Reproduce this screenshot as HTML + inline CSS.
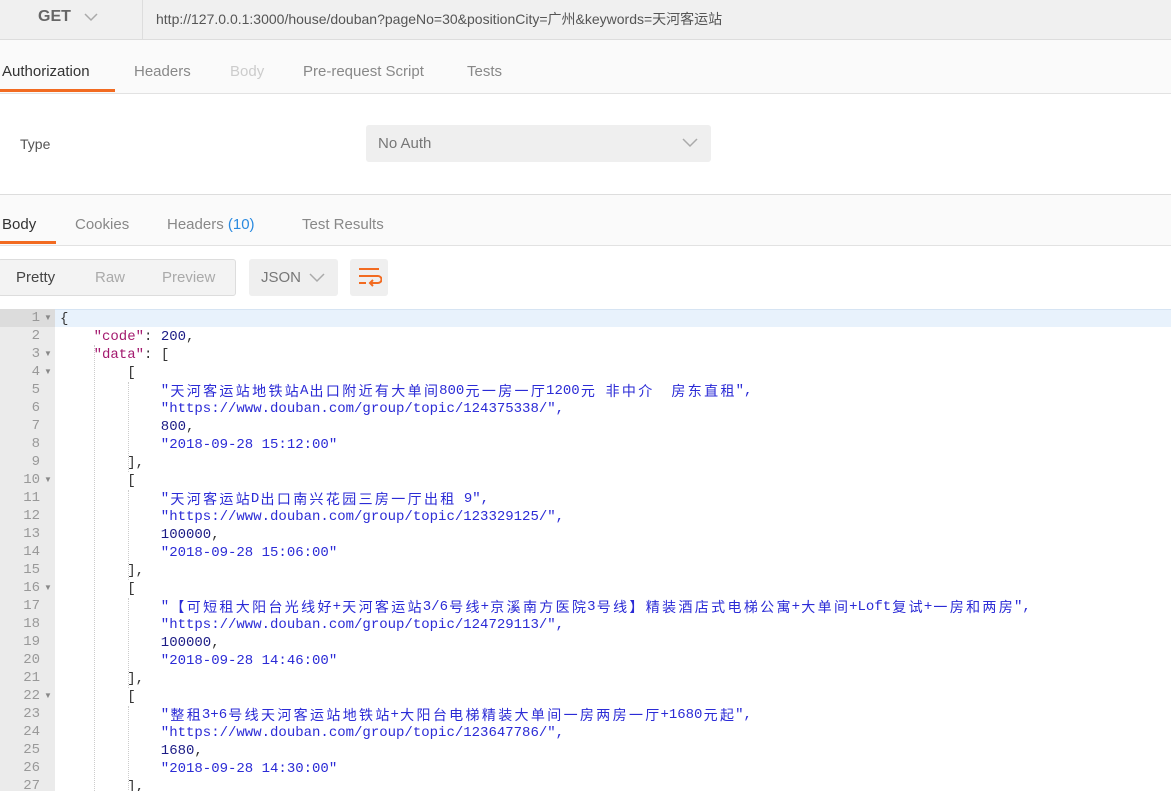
<!DOCTYPE html>
<html style="overflow:hidden;width:1171px;height:791px"><head><meta charset="utf-8"><style>
*{margin:0;padding:0;box-sizing:border-box}
body{width:1171px;height:791px;overflow:hidden;background:#fff;font-family:"Liberation Sans","Noto Sans CJK SC",sans-serif;position:relative;color:#505050}
.abs{position:absolute}
.top{left:0;top:0;width:1171px;height:40px;background:#f0f0f0;border-bottom:1px solid #ddd}
.tabs{left:0;top:40px;width:1171px;height:54px;background:#fafafa;border-bottom:1px solid #e2e2e2}
.t{position:absolute;font-size:15px;color:#888}
.rtabs{left:0;top:194px;width:1171px;height:52px;background:#fafafa;border-top:1px solid #ddd;border-bottom:1px solid #e2e2e2}
.code{font-family:"Liberation Mono","Noto Sans CJK SC",monospace;font-size:14px;white-space:pre;overflow:hidden}
.cj{display:inline-block;vertical-align:top;width:16.35px;height:18px;text-align:center;font-family:"Noto Sans CJK SC",sans-serif;font-size:14px;line-height:18px;overflow:hidden}
.ln{position:absolute;left:0;width:40px;text-align:right;color:#999;font-family:"Liberation Mono",monospace;font-size:14px}
.ar{position:absolute;left:44px;color:#888;font-size:8px}
.k{color:#a3196e}.s{color:#2b2bd6}.n{color:#1c1c86}.p{color:#333}
.g{position:absolute;border-left:1px dotted #ccc;width:0}
#wrap{position:absolute;left:0;top:0;width:1171px;height:791px;overflow:hidden}
</style></head><body>
<div class="abs top"></div>
<div class="abs" style="left:142px;top:0;width:1px;height:40px;background:#ddd"></div>
<div class="abs" style="left:38px;top:8px;font-size:16px;color:#666;font-weight:bold">GET</div>
<svg class="abs" style="left:84px;top:12px" width="14" height="10"><path d="M1 2l6 6 6-6" stroke="#aaa" stroke-width="1.5" fill="none"/></svg>
<div class="abs" style="left:156px;top:9px;font-size:14px;color:#555">http://127.0.0.1:3000/house/douban?pageNo=30&amp;positionCity=广州&amp;keywords=天河客运站</div>
<div class="abs tabs"></div>
<div class="t" style="left:2px;top:63px;color:#333">Authorization</div>
<div class="abs" style="left:0;top:89px;width:115px;height:3px;background:#f26b21"></div>
<div class="t" style="left:134px;top:63px">Headers</div>
<div class="t" style="left:230px;top:63px;color:#ccc">Body</div>
<div class="t" style="left:303px;top:63px">Pre-request Script</div>
<div class="t" style="left:467px;top:63px">Tests</div>
<div class="abs" style="left:20px;top:136px;font-size:14px;color:#555">Type</div>
<div class="abs" style="left:366px;top:125px;width:345px;height:37px;background:#efefef;border-radius:3px"></div>
<div class="abs" style="left:378px;top:135px;font-size:15px;color:#777">No Auth</div>
<svg class="abs" style="left:682px;top:138px" width="16" height="10"><path d="M1 1l7 7 7-7" stroke="#aaa" stroke-width="1.5" fill="none"/></svg>
<div class="abs rtabs"></div>
<div class="t" style="left:2px;top:216px;color:#333">Body</div>
<div class="abs" style="left:0;top:241px;width:56px;height:3px;background:#f26b21"></div>
<div class="t" style="left:75px;top:216px">Cookies</div>
<div class="t" style="left:167px;top:216px">Headers <span style="color:#2a8ae0">(10)</span></div>
<div class="t" style="left:302px;top:216px">Test Results</div>
<div class="abs" style="left:-2px;top:259px;width:238px;height:37px;background:#f3f3f3;border:1px solid #ddd;border-radius:3px"></div>
<div class="t" style="left:16px;top:269px;color:#444">Pretty</div>
<div class="t" style="left:95px;top:269px;color:#aaa">Raw</div>
<div class="t" style="left:162px;top:269px;color:#aaa">Preview</div>
<div class="abs" style="left:249px;top:259px;width:89px;height:37px;background:#efefef;border-radius:3px"></div>
<div class="t" style="left:261px;top:269px;color:#777">JSON</div>
<svg class="abs" style="left:309px;top:273px" width="16" height="10"><path d="M1 1l7 7 7-7" stroke="#aaa" stroke-width="1.5" fill="none"/></svg>
<div class="abs" style="left:350px;top:259px;width:38px;height:37px;background:#efefef;border-radius:3px"></div>
<svg class="abs" style="left:358px;top:267px" width="24" height="22"><path d="M1 2h20M1 9h19a3.5 3.5 0 0 1 0 7h-7M1 16h7" stroke="#f26b21" stroke-width="2" fill="none"/><path d="M15 13l-3 3 3 3" stroke="#f26b21" stroke-width="2" fill="none"/></svg>
<div id="wrap">
<div class="abs" style="left:0;top:309px;width:55px;height:482px;background:#ebebeb"></div>
<div class="abs" style="left:0;top:309px;width:1171px;height:18px;background:#e8f2fc;border-top:1px solid #d6e4f3"></div>
<div class="abs" style="left:0;top:309px;width:55px;height:18px;background:#dcdcdc"></div>
<div id="code"></div>
</div>
<script>
var L=[
['{','p',0],
['<span class="k">"code"</span><span class="p">: </span><span class="n">200</span><span class="p">,</span>',null,1],
['<span class="k">"data"</span><span class="p">: [</span>',null,1],
['[','p',2],
['"天河客运站地铁站A出口附近有大单间800元一房一厅1200元 非中介  房东直租",','s',3],
['"https://www.douban.com/group/topic/124375338/",','s',3],
['<span class="n">800</span><span class="p">,</span>',null,3],
['"2018-09-28 15:12:00"','s',3],
['],','p',2],
['[','p',2],
['"天河客运站D出口南兴花园三房一厅出租 9",','s',3],
['"https://www.douban.com/group/topic/123329125/",','s',3],
['<span class="n">100000</span><span class="p">,</span>',null,3],
['"2018-09-28 15:06:00"','s',3],
['],','p',2],
['[','p',2],
['"【可短租大阳台光线好+天河客运站3/6号线+京溪南方医院3号线】精装酒店式电梯公寓+大单间+Loft复试+一房和两房",','s',3],
['"https://www.douban.com/group/topic/124729113/",','s',3],
['<span class="n">100000</span><span class="p">,</span>',null,3],
['"2018-09-28 14:46:00"','s',3],
['],','p',2],
['[','p',2],
['"整租3+6号线天河客运站地铁站+大阳台电梯精装大单间一房两房一厅+1680元起",','s',3],
['"https://www.douban.com/group/topic/123647786/",','s',3],
['<span class="n">1680</span><span class="p">,</span>',null,3],
['"2018-09-28 14:30:00"','s',3],
['],','p',2]];
var fold={1:1,3:1,4:1,10:1,16:1,22:1};
var h='';
for(var i=0;i<L.length;i++){var y=309+i*18;var n=i+1;
h+='<div class="ln" style="top:'+(y+1)+'px">'+n+'</div>';
if(fold[n])h+='<div class="ar" style="top:'+(y+4)+'px">▼</div>';
var x=60+L[i][2]*33.6;
var t=L[i][0].replace(/([\u3000-\u9fff\uff00-\uffef])/g,'<span class="cj">$1</span>');
var c=L[i][1]?'<span class="'+L[i][1]+'">'+t+'</span>':t;
h+='<div class="abs code" style="left:'+x+'px;top:'+(y+1)+'px;line-height:18px;height:18px">'+c+'</div>';}
h+='<div class="g" style="left:94px;top:345px;height:446px"></div>';
[364,472,580,688].forEach(function(a){h+='<div class="g" style="left:128px;top:'+(a+18)+'px;height:90px"></div>';});
document.getElementById('code').innerHTML=h;
</script>
</body></html>
